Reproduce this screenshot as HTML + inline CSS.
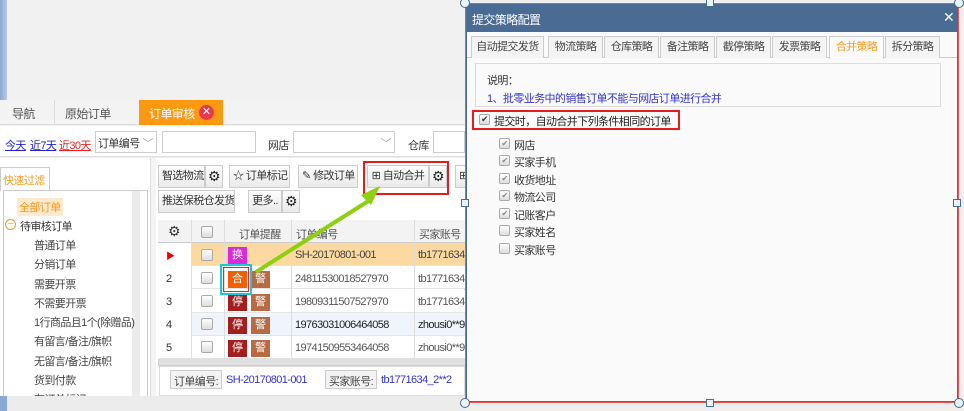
<!DOCTYPE html>
<html><head><meta charset="utf-8">
<style>
*{margin:0;padding:0;box-sizing:border-box}
body{width:964px;height:411px;overflow:hidden;position:relative;background:#efefef;font-family:"Liberation Sans","Noto Sans CJK SC",sans-serif;font-size:11px;color:#333;letter-spacing:-0.6px}
.a{position:absolute;white-space:nowrap}
.btn{position:absolute;height:23px;border:1px solid #ccc;background:linear-gradient(#fdfdfd,#eaeaea);line-height:21px;font-size:11px;color:#333;padding:0 3px;white-space:nowrap;overflow:hidden;text-align:center}
.gear{position:absolute;width:18px;height:23px;border:1px solid #ccc;background:linear-gradient(#fdfdfd,#eaeaea);text-align:center;line-height:21px;font-size:14px;color:#222}
.cb{position:absolute;width:12px;height:12px;border:1px solid #aaa;border-radius:2px;background:linear-gradient(#fff,#ddd)}
.tag{position:absolute;width:19px;height:17px;color:#fff;font-size:11px;text-align:center;line-height:17px;letter-spacing:0}
.row{position:absolute;left:158px;width:307px;height:23px;border-bottom:1px solid #e4e4e4;font-size:11px}
.dtab{position:absolute;top:36px;height:22px;border:1px solid #ccc;border-bottom:none;background:#f4f4f4;line-height:21px;text-align:center;font-size:11px;color:#444;white-space:nowrap}
.it{position:absolute;left:499px;font-size:11px;color:#333}
.it .cb{left:0;top:1px;width:11px;height:11px}
.it span{position:absolute;left:15px;top:0;white-space:nowrap}
</style></head><body>
<div class="a" style="left:0;top:0;width:7px;height:100px;background:linear-gradient(90deg,#8aa8d4,#b8cbe6)"></div>
<div class="a" style="left:7px;top:0;width:458px;height:100px;background:#f1f1f1"></div>
<div class="a" style="left:0;top:100px;width:465px;height:25px;background:#f3f3f3;border-bottom:1px solid #ddd"></div>
<div class="a" style="left:12px;top:105px;font-size:12px;color:#555">导航</div>
<div class="a" style="left:54px;top:100px;width:1px;height:25px;background:#ddd"></div>
<div class="a" style="left:65px;top:105px;font-size:12px;color:#555">原始订单</div>
<div class="a" style="left:139px;top:100px;width:84px;height:25px;background:#fb9a10"></div>
<div class="a" style="left:149px;top:105px;font-size:12px;color:#fff">订单审核</div>
<div class="a" style="left:199px;top:105px;width:15px;height:15px;border-radius:50%;background:#e8384a;color:#fff;font-size:11px;text-align:center;line-height:15px;letter-spacing:0">✕</div>
<div class="a" style="left:0;top:126px;width:465px;height:31px;background:#fff;border-bottom:1px solid #ddd"></div>
<div class="a" style="left:5px;top:137px;color:#22c;text-decoration:underline">今天</div>
<div class="a" style="left:30px;top:137px;color:#22c;text-decoration:underline">近7天</div>
<div class="a" style="left:59px;top:137px;color:#e22;text-decoration:underline">近30天</div>
<div class="a" style="left:95px;top:131px;width:62px;height:22px;border:1px solid #ccc;background:#fff;padding:3px 2px;color:#333">订单编号 <span style="color:#aaa;position:absolute;right:3px">﹀</span></div>
<div class="a" style="left:162px;top:131px;width:94px;height:22px;border:1px solid #ccc;background:#fff"></div>
<div class="a" style="left:268px;top:137px">网店</div>
<div class="a" style="left:293px;top:131px;width:102px;height:22px;border:1px solid #ccc;background:#fff;padding:3px;color:#aaa;text-align:right">﹀</div>
<div class="a" style="left:408px;top:137px">仓库</div>
<div class="a" style="left:433px;top:131px;width:32px;height:22px;border:1px solid #ccc;background:#fff"></div>
<div class="a" style="left:0;top:158px;width:465px;height:238px;background:#fff"></div>
<div class="a" style="left:0;top:167px;width:50px;height:24px;border:1px solid #ccc;border-bottom:none;background:#fff;color:#f39a1f;font-size:11px;padding:4px 2px">快速过滤</div>
<div class="a" style="left:3px;top:190px;width:145px;height:221px;border:1px solid #ccc;background:#fff"></div>
<div class="a" style="left:132px;top:191px;width:8px;height:220px;background:#ececec"></div>
<div class="a" style="left:17px;top:198px;background:#fde9cc;color:#f39a1f;padding:1px 2px">全部订单</div>
<div class="a" style="left:5px;top:219px;width:11px;height:11px;border:1px solid #f39a1f;border-radius:50%;color:#f39a1f;font-size:10px;line-height:8px;text-align:center">–</div>
<div class="a" style="left:20px;top:218px;color:#333">待审核订单</div>
<div class="a" style="left:34px;top:237px;line-height:19.3px;color:#444">普通订单<br>分销订单<br>需要开票<br>不需要开票<br>1行商品且1个(除赠品)<br>有留言/备注/旗帜<br>无留言/备注/旗帜<br>货到付款<br>有订单标记</div>
<div class="a" style="left:150px;top:158px;width:6px;height:238px;background:#f4f4f4;border-left:1px solid #ddd"></div>
<div class="btn" style="left:158px;top:165px;width:47px">智选物流</div><div class="gear" style="left:205px;top:165px">⚙</div>
<div class="btn" style="left:229px;top:165px;width:61px">☆ 订单标记</div>
<div class="btn" style="left:298px;top:165px;width:60px">✎ 修改订单</div>
<div class="btn" style="left:367px;top:165px;width:62px">⊞ 自动合并</div><div class="gear" style="left:429px;top:165px">⚙</div>
<div class="btn" style="left:455px;top:165px;width:12px">⊞</div>
<div class="a" style="left:363px;top:161px;width:86px;height:34px;border:2px solid #e51c1c"></div>
<div class="btn" style="left:158px;top:190px;width:77px">推送保税仓发货</div>
<div class="btn" style="left:248px;top:190px;width:34px">更多..</div><div class="gear" style="left:282px;top:190px">⚙</div>
<div class="a" style="left:158px;top:220px;width:307px;height:146px;border:1px solid #ccc;background:#fff"></div>
<div class="a" style="left:158px;top:220px;width:307px;height:23px;background:#f3f3f3;border-bottom:1px solid #ccc"></div>
<div class="a" style="left:168px;top:223px;font-size:14px">⚙</div>
<div class="cb" style="left:201px;top:226px"></div>
<div class="a" style="left:239px;top:226px;color:#555">订单提醒</div>
<div class="a" style="left:296px;top:226px;color:#555">订单编号</div>
<div class="a" style="left:419px;top:226px;color:#555">买家账号</div>
<div class="row" style="top:243px;background:#fcd9a0"></div>
<div class="row" style="top:266px;background:#fff"></div>
<div class="row" style="top:290px;background:#fff"></div>
<div class="row" style="top:313px;background:#f0f5fd"></div>
<div class="row" style="top:336px;background:#fff"></div>
<div class="a" style="left:158px;top:243px;width:33px;height:116px;background:#fff"></div>
<div class="a" style="left:191px;top:220px;width:1px;height:139px;background:#ddd"></div>
<div class="a" style="left:224px;top:220px;width:1px;height:139px;background:#ddd"></div>
<div class="a" style="left:291px;top:220px;width:1px;height:139px;background:#ddd"></div>
<div class="a" style="left:414px;top:220px;width:1px;height:139px;background:#ddd"></div>
<div class="a" style="left:166px;top:249px;color:#e00;font-size:9px">▶</div>
<div class="a" style="left:166px;top:273px">2</div>
<div class="a" style="left:166px;top:296px">3</div>
<div class="a" style="left:166px;top:319px">4</div>
<div class="a" style="left:166px;top:342px">5</div>
<div class="cb" style="left:201px;top:249px"></div><div class="cb" style="left:201px;top:272px"></div><div class="cb" style="left:201px;top:295px"></div><div class="cb" style="left:201px;top:318px"></div><div class="cb" style="left:201px;top:341px"></div>
<div class="tag" style="left:228px;top:247px;background:#d92bd9">换</div>
<div class="tag" style="left:228px;top:271px;background:#f06000">合</div><div class="tag" style="left:251px;top:271px;background:#b66b45">警</div>
<div class="tag" style="left:228px;top:294px;background:#a51e1e">停</div><div class="tag" style="left:251px;top:294px;background:#b66b45">警</div>
<div class="tag" style="left:228px;top:317px;background:#a51e1e">停</div><div class="tag" style="left:251px;top:317px;background:#b66b45">警</div>
<div class="tag" style="left:228px;top:340px;background:#a51e1e">停</div><div class="tag" style="left:251px;top:340px;background:#b66b45">警</div>
<div class="a" style="left:220px;top:264px;width:32px;height:31px;border:2px solid #1cc6d4"></div>
<div class="a" style="left:223px;top:267px;width:26px;height:25px;border:1px solid #e22"></div>
<div class="a" style="left:295px;top:249px;color:#444">SH-20170801-001</div>
<div class="a" style="left:295px;top:273px;color:#555">24811530018527970</div>
<div class="a" style="left:295px;top:296px;color:#555">19809311507527970</div>
<div class="a" style="left:295px;top:319px;color:#222">19763031006464058</div>
<div class="a" style="left:295px;top:342px;color:#555">19741509553464058</div>
<div class="a" style="left:418px;top:249px;color:#444;width:47px;overflow:hidden">tb1771634</div>
<div class="a" style="left:418px;top:273px;color:#555;width:47px;overflow:hidden">tb1771634</div>
<div class="a" style="left:418px;top:296px;color:#555;width:47px;overflow:hidden">tb1771634</div>
<div class="a" style="left:418px;top:319px;color:#222;width:47px;overflow:hidden">zhousi0**9</div>
<div class="a" style="left:418px;top:342px;color:#555;width:47px;overflow:hidden">zhousi0**9</div>
<div class="a" style="left:159px;top:358px;width:306px;height:7px;background:#e0e0e0"></div>
<div class="a" style="left:159px;top:366px;width:306px;height:30px;background:#fff;border:1px solid #ddd"></div>
<div class="a" style="left:170px;top:370px;width:52px;height:19px;border:1px solid #ccc;background:#f3f3f3;padding:2px 3px;color:#444">订单编号:</div>
<div class="a" style="left:226px;top:374px;color:#33c">SH-20170801-001</div>
<div class="a" style="left:325px;top:370px;width:52px;height:19px;border:1px solid #ccc;background:#f3f3f3;padding:2px 3px;color:#444">买家账号:</div>
<div class="a" style="left:381px;top:374px;color:#33c">tb1771634_2**2</div>
<div class="a" style="left:0;top:396px;width:7px;height:15px;background:#8aa8d4"></div>
<div class="a" style="left:7px;top:396px;width:458px;height:15px;background:#ececec"></div>
<svg class="a" style="left:0;top:0" width="470" height="411"><line x1="256" y1="272" x2="370" y2="200" stroke="#8ecf0f" stroke-width="4"/><polygon points="380,186 361,195 371,205" fill="#8ecf0f"/></svg>
<div class="a" style="left:465px;top:3px;width:494px;height:400px;background:#fafafa;border:1px solid #e55;box-shadow:inset 0 0 0 1px #4a6b94"></div>
<div class="a" style="left:467px;top:5px;width:490px;height:27px;background:#4a6b94"></div>
<div class="a" style="left:472px;top:11px;color:#fff;font-size:12px">提交策略配置</div>
<div class="a" style="left:943px;top:9px;color:#fff;font-size:14px;letter-spacing:0">✕</div>
<div class="a" style="left:467px;top:57px;width:490px;height:1px;background:#ccc"></div>
<div class="dtab" style="left:471px;width:73px">自动提交发货</div>
<div class="dtab" style="left:548px;width:55px">物流策略</div>
<div class="dtab" style="left:604px;width:55px">仓库策略</div>
<div class="dtab" style="left:660px;width:55px">备注策略</div>
<div class="dtab" style="left:716px;width:55px">截停策略</div>
<div class="dtab" style="left:772px;width:55px">发票策略</div>
<div class="dtab" style="left:829px;width:55px;background:#fafafa;color:#f39a1f;height:23px">合并策略</div>
<div class="dtab" style="left:885px;width:55px">拆分策略</div>
<div class="a" style="left:475px;top:63px;width:466px;height:44px;border:1px solid #ddd;background:#fafafa"></div>
<div class="a" style="left:487px;top:72px;color:#333">说明：</div>
<div class="a" style="left:487px;top:90px;color:#33c">1、批零业务中的销售订单不能与网店订单进行合并</div>
<div class="a" style="left:472px;top:110px;width:208px;height:20px;border:2px solid #e51c1c"></div>
<div class="cb" style="left:479px;top:114px;width:11px;height:11px;font-size:9px;line-height:9px;text-align:center">✔</div>
<div class="a" style="left:494px;top:113px;color:#222">提交时，自动合并下列条件相同的订单</div>
<div class="it" style="top:137px"><div class="cb" style="color:#888;font-size:8px;line-height:9px;text-align:center">✔</div><span>网店</span></div>
<div class="it" style="top:154px"><div class="cb" style="color:#888;font-size:8px;line-height:9px;text-align:center">✔</div><span>买家手机</span></div>
<div class="it" style="top:172px"><div class="cb" style="color:#888;font-size:8px;line-height:9px;text-align:center">✔</div><span>收货地址</span></div>
<div class="it" style="top:189px"><div class="cb" style="color:#888;font-size:8px;line-height:9px;text-align:center">✔</div><span>物流公司</span></div>
<div class="it" style="top:207px"><div class="cb" style="color:#888;font-size:8px;line-height:9px;text-align:center">✔</div><span>记账客户</span></div>
<div class="it" style="top:224px"><div class="cb"></div><span>买家姓名</span></div>
<div class="it" style="top:242px"><div class="cb"></div><span>买家账号</span></div>
<div class="a" style="left:460px;top:-2px;width:10px;height:10px;border:1px solid #4a6b94;border-radius:50%;background:#e8f4f8"></div>
<div class="a" style="left:706px;top:-1px;width:8px;height:8px;border:1px solid #4a6b94;background:#e8f4f8"></div>
<div class="a" style="left:954px;top:-2px;width:10px;height:10px;border:1px solid #4a6b94;border-radius:50%;background:#e8f4f8"></div>
<div class="a" style="left:461px;top:199px;width:8px;height:8px;border:1px solid #4a6b94;background:#e8f4f8"></div>
<div class="a" style="left:953px;top:199px;width:8px;height:8px;border:1px solid #4a6b94;background:#e8f4f8"></div>
<div class="a" style="left:460px;top:398px;width:10px;height:10px;border:1px solid #4a6b94;border-radius:50%;background:#e8f4f8"></div>
<div class="a" style="left:706px;top:399px;width:8px;height:8px;border:1px solid #4a6b94;background:#e8f4f8"></div>
<div class="a" style="left:954px;top:398px;width:10px;height:10px;border:1px solid #4a6b94;border-radius:50%;background:#e8f4f8"></div>
</body></html>
